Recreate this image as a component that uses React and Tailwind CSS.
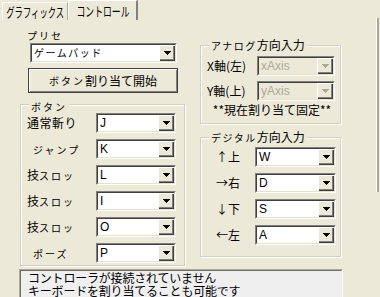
import React from "react";

const Arrow = ({ disabled }) => (
  <svg width="7" height="4" viewBox="0 0 7 4" shapeRendering="crispEdges">
    <g fill={disabled ? "#aca899" : "#000"}>
      <rect x="0" y="0" width="7" height="1" />
      <rect x="1" y="1" width="5" height="1" />
      <rect x="2" y="2" width="3" height="1" />
      <rect x="3" y="3" width="1" height="1" />
    </g>
  </svg>
);

function Select({ value, w, disabled, kana }) {
  return (
    <div
      className={`${w} h-[20px] shrink-0 flex border border-t-[#808080] border-l-[#808080] border-b-white border-r-white`}
    >
      <div
        className={`flex-1 flex border border-t-[#404040] border-l-[#404040] border-b-[#e4e1d0] border-r-[#e4e1d0] ${
          disabled ? "bg-[#ece9d8]" : "bg-white"
        }`}
      >
        <div
          className={`flex-1 pl-[2px] leading-[16px] whitespace-nowrap overflow-hidden ${
            kana
              ? "text-[10px] tracking-[1.5px] font-['Noto_Sans_CJK_JP',sans-serif]"
              : "text-[12px] font-['Liberation_Sans',sans-serif]"
          } ${disabled ? "text-[#aca899]" : "text-black"}`}
        >
          {value}
        </div>
        <div className="w-[16px] h-[16px] bg-[#ece9d8] flex items-center justify-center shadow-[inset_1px_1px_0_#fff,inset_-1px_-1px_0_#404040,inset_-2px_-2px_0_#808080]">
          <Arrow disabled={disabled} />
        </div>
      </div>
    </div>
  );
}

function Small({ children }) {
  return <span className="text-[10px] tracking-[2px]">{children}</span>;
}

export default function App() {
  return (
    <div className="w-[380px] h-[297px] overflow-hidden bg-[#ece9d8] flex flex-col font-['Noto_Sans_CJK_JP',sans-serif] text-black">
      {/* tabs */}
      <div className="h-[20px] flex items-end pl-[2px] shrink-0">
        <div className="w-[66px] h-[18px] border-t border-l border-white border-r border-r-[#aca899] rounded-tl-[2px] flex items-center justify-center overflow-hidden">
          <span className="inline-block text-[13px] leading-[14px] scale-x-[0.64] whitespace-nowrap">
            グラフィックス
          </span>
        </div>
        <div className="w-[70px] h-[20px] border-t border-l border-white border-r-2 border-r-[#808080] rounded-tl-[2px] flex items-center justify-center overflow-hidden">
          <span className="inline-block text-[13px] leading-[14px] scale-x-[0.68] whitespace-nowrap">
            コントロール
          </span>
        </div>
      </div>

      {/* panel */}
      <div className="flex-1 flex">
        <div className="flex-1 flex flex-col">
          <div className="flex">
            {/* left column */}
            <div className="ml-[20px] w-[165px] flex flex-col">
              <div className="mt-[6px] h-[14px] leading-[14px] pl-[7px]">
                <Small>プリセ</Small>
              </div>
              <div className="mt-[3px] ml-[10px]">
                <Select value="ゲームパッド" w="w-[147px]" kana />
              </div>
              <div className="mt-[5px] ml-[8px] w-[150px] h-[25px] border border-[#404040] shadow-[inset_1px_1px_0_#fff,inset_-1px_-1px_0_#808080] flex items-center justify-center text-[12px] leading-[14px]">
                <Small>ボタン</Small>
                <span>割り当て開始</span>
              </div>
              {/* button group */}
              <div className="mt-[11px] h-[162px] relative border border-[#d0d0bf] shadow-[inset_1px_1px_0_#fff,1px_1px_0_#fff] pt-[8px] pl-[6px] flex flex-col gap-[6px]">
                <div className="absolute top-[-8px] left-[8px] px-[2px] bg-[#ece9d8] leading-[14px]">
                  <Small>ボタン</Small>
                </div>
                {[
                  ["通常斬り", "J", false],
                  ["ジャンプ", "K", true],
                  ["技スロッ", "L", false],
                  ["技スロッ", "I", false],
                  ["技スロッ", "O", false],
                  ["ポーズ", "P", true],
                ].map(([label, val, small], i) => (
                  <div key={i} className="flex items-center h-[20px]">
                    <div className="w-[69px] text-[12px] leading-[14px] whitespace-nowrap">
                      {small ? (
                        <span className="pl-[6px]">
                          <Small>{label}</Small>
                        </span>
                      ) : label === "技スロッ" ? (
                        <span>
                          技<Small>スロッ</Small>
                        </span>
                      ) : (
                        <span className="tracking-[0.5px]">{label}</span>
                      )}
                    </div>
                    <Select value={val} w="w-[80px]" />
                  </div>
                ))}
              </div>
            </div>

            {/* right column */}
            <div className="ml-[15px] w-[141px] flex flex-col">
              <div className="mt-[25px] h-[79px] relative border border-[#d0d0bf] shadow-[inset_1px_1px_0_#fff,1px_1px_0_#fff] pt-[10px] flex flex-col">
                <div className="absolute top-[-8px] left-[8px] px-[2px] bg-[#ece9d8] leading-[14px] text-[12px] whitespace-nowrap">
                  <span className="text-[10px] tracking-[1.5px]">アナログ</span>
                  方向入力
                </div>
                <div className="flex items-center pl-[6px]">
                  <div className="w-[50px] text-[12px] leading-[14px]">X軸(左)</div>
                  <Select value="xAxis" w="w-[78px]" disabled />
                </div>
                <div className="mt-[5px] flex items-center pl-[6px]">
                  <div className="w-[50px] text-[12px] leading-[14px]">Y軸(上)</div>
                  <Select value="yAxis" w="w-[78px]" disabled />
                </div>
                <div className="mt-[2px] h-[14px] leading-[14px] text-[12px] text-center pl-[3px]">
                  **現在割り当て固定**
                </div>
              </div>

              <div className="mt-[13px] h-[120px] relative border border-[#d0d0bf] shadow-[inset_1px_1px_0_#fff,1px_1px_0_#fff] pt-[9px] flex flex-col gap-[6px]">
                <div className="absolute top-[-8px] left-[8px] px-[2px] bg-[#ece9d8] leading-[14px] text-[12px] whitespace-nowrap">
                  <span className="text-[10px] tracking-[1.5px]">デジタル</span>
                  方向入力
                </div>
                {[
                  ["↑上", "W"],
                  ["→右", "D"],
                  ["↓下", "S"],
                  ["←左", "A"],
                ].map(([label, val]) => (
                  <div key={val} className="flex items-center h-[20px]">
                    <div className="w-[54px] text-center text-[12px] leading-[14px]">{label}</div>
                    <Select value={val} w="w-[81px]" />
                  </div>
                ))}
              </div>
            </div>
          </div>

          {/* status text box */}
          <div className="mt-[3px] ml-[19px] w-[324px] h-[40px] shrink-0 border border-t-[#aca899] border-l-[#aca899] border-b-white border-r-white">
            <div className="h-full border border-t-[#716f64] border-l-[#716f64] border-b-[#f1efe2] border-r-[#f1efe2] bg-[#efefef] pl-[7px] text-[12px] leading-[13px] tracking-[-0.2px]">
              <div>コントローラが接続されていません</div>
              <div>キーボードを割り当てることも可能です</div>
            </div>
          </div>
        </div>
        <div className="w-[3px] h-[174px] self-start mt-[-2px] mr-[1px] border-l border-white border-r-2 border-r-[#aca899]" />
      </div>
    </div>
  );
}
